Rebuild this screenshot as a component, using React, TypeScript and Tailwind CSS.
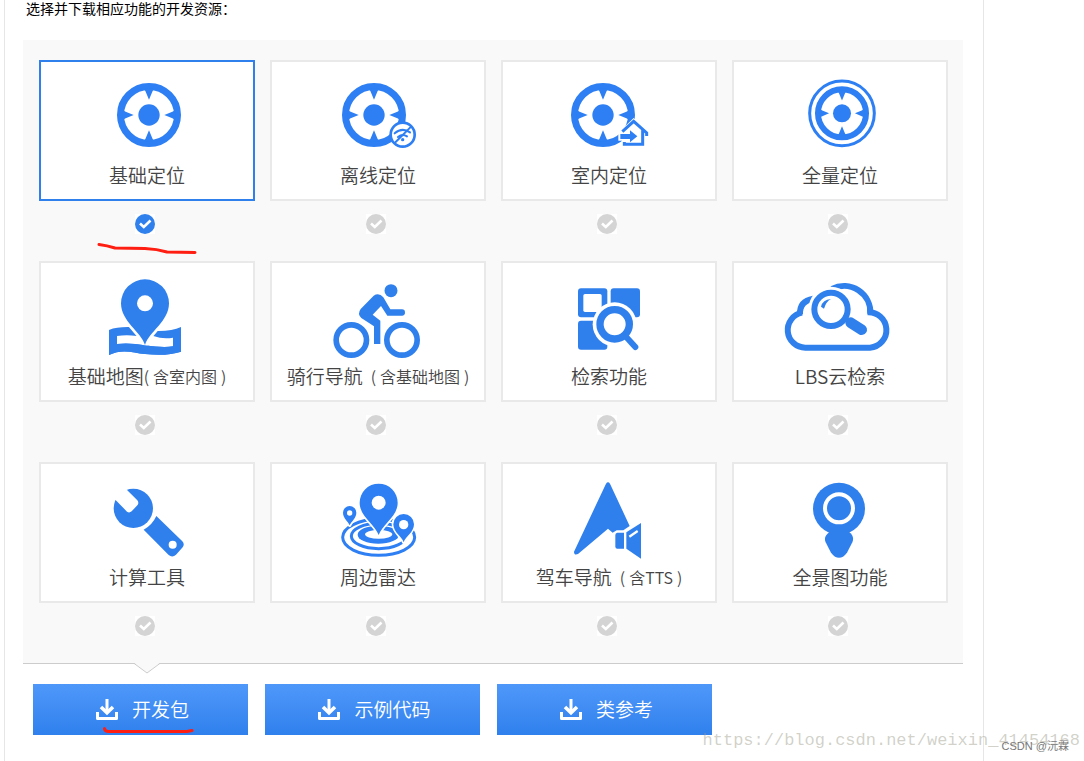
import React, { useState } from 'react';
import { clsx } from 'clsx';

const BLUE = '#2f80ed';
const BRIGHT = '#2d7ff3';

// Crosshair shared by all positioning products
const Compass = ({ cx, cy, scale = 1 }: { cx: number; cy: number; scale?: number }) => (
  <g transform={`translate(${cx} ${cy}) scale(${scale})`} fill={BRIGHT}>
    <circle r="85.5" fill="none" stroke={BRIGHT} strokeWidth="21" />
    <circle r="32" />
    {[0, 90, 180, 270].map((angle) => (
      <path key={angle} d="M-15 -80 L-10 -70 L0 -46 L10 -70 L15 -80 Z" transform={`rotate(${angle})`} />
    ))}
  </g>
);

const BasicLocation = () => <Compass cx={447} cy={345} />;

const OfflineLocation = () => (
  <>
    <Compass cx={342} cy={195} />
    <circle cx="428" cy="254" r="36" fill="#fff" stroke={BRIGHT} strokeWidth="8" />
    <g fill="none" stroke={BRIGHT} strokeWidth="6" strokeLinecap="round">
      <path d="M404 250 Q426 231 450 247" />
      <path d="M414 261 Q427 250 441 259" />
      <path d="M407 276 L451 232" />
    </g>
    <circle cx="428" cy="269" r="5" fill={BRIGHT} />
  </>
);

const IndoorLocation = () => (
  <>
    <Compass cx={339} cy={195} />
    <path d="M431 204 L385 248 V272 H396 V291 H468 V262 L478 250 Z" fill="#fff" />
    <path
      d="M397 245 L431 214 L470 249 V258 M458 240 V283 H403 V276"
      fill="none"
      stroke={BRIGHT}
      strokeWidth="9"
    />
    <path d="M391 252 H420 V241 L442 259 L420 277 V267 H391 Z" fill={BRIGHT} />
  </>
);

const FullLocation = () => (
  <>
    <circle cx="366" cy="190" r="97" fill="none" stroke={BRIGHT} strokeWidth="9" />
    <Compass cx={366} cy={190} scale={0.844} />
  </>
);

const BasicMap = () => (
  <>
    <path
      d="M237 225 Q265 214 312 217 L345 224 L380 228 Q425 229 453 216 V290 Q410 304 345 297 C310 293 275 280 237 300 Z"
      fill={BLUE}
    />
    <path d="M261 243 Q290 238 320 243 H370 Q400 254 429 248 V274 Q400 279 345 271 Q300 263 261 267 Z" fill="#fff" />
    <path
      d="M345 270 C333 230 273 200 273 145 A72 72 0 0 1 417 145 C417 200 357 230 345 270 Z"
      fill={BLUE}
      stroke="#fff"
      strokeWidth="16"
      strokeLinejoin="round"
      paintOrder="stroke"
    />
    {/* front fold of the map, over the outline of the pin */}
    <path
      d="M237 267 H261 Q300 263 345 271 Q400 279 429 274 H453 V290 Q410 304 345 297 C310 293 275 280 237 300 Z"
      fill={BLUE}
    />
    <circle cx="345" cy="145" r="24" fill="#fff" />
  </>
);

const Cycling = () => (
  <g fill={BLUE}>
    <g fill="none" stroke={BLUE} strokeWidth="17">
      <circle cx="274" cy="255" r="45.5" />
      <circle cx="426" cy="255" r="45.5" />
    </g>
    <circle cx="393" cy="107" r="19.5" />
    <path d="M341 122 L302 162 Q291 177 304 189 L342 214 V267 H361 V197 L338 179 L363 153 L382 182 H426 Q435 181 435 173 Q435 163 426 163 H391 L370 127 Q357 112 341 122 Z" />
  </g>
);

const Search = () => (
  <>
    <g fill={BLUE}>
      <rect x="264" y="100" width="88" height="87" rx="9" />
      <rect x="362" y="100" width="88" height="87" rx="9" />
      <rect x="264" y="197" width="88" height="87" rx="9" />
    </g>
    <rect x="280" y="117" width="55" height="54" rx="5" fill="#fff" />
    <circle cx="374" cy="208" r="66" fill="#fff" />
    <circle cx="374" cy="208" r="44" fill="none" stroke={BLUE} strokeWidth="22" />
    <path d="M408 245 L436 276" stroke={BLUE} strokeWidth="18" strokeLinecap="round" />
  </>
);

const CloudSearch = () => (
  <>
    <g fill="none" stroke={BLUE} strokeWidth="18">
      <path d="M336 102 A79 79 0 0 1 451 177" />
      <path d="M442 172 A53 53 0 1 1 450 278 H256 A53 53 0 0 1 246 173" />
      <path d="M240 178 Q238 138 280 131" />
    </g>
    <circle cx="333" cy="163" r="68" fill="#fff" />
    <circle cx="333" cy="163" r="50" fill="none" stroke={BLUE} strokeWidth="18" />
    <path d="M392 203 L425 224" stroke={BLUE} strokeWidth="32" strokeLinecap="round" />
    <path d="M303 155 Q308 134 333 132 Q318 140 312 161 Z" fill={BLUE} />
  </>
);

const Wrench = () => (
  <>
    <circle cx="310" cy="160" r="59" fill={BLUE} />
    <path d="M288 102 L322 136 Q328 144 322 151 L305 169 Q298 175 291 170 L256 134 L230 110 L260 80 Z" fill="#fff" />
    <path
      d="M379 183 L457 259 Q465 268 458 277 L438 299 Q427 309 416 300 L341 224 Q367 210 379 183 Z"
      fill={BLUE}
    />
    <circle cx="428" cy="269" r="12" fill="#fff" />
  </>
);

const Radar = () => (
  <>
    <g fill="none" stroke={BRIGHT}>
      <ellipse cx="1046" cy="247" rx="108" ry="54" strokeWidth="9" />
      <ellipse cx="1046" cy="243" rx="82" ry="38" strokeWidth="9" />
    </g>
    <ellipse cx="1045" cy="239" rx="62" ry="27" fill={BRIGHT} />
    <ellipse cx="1046" cy="238" rx="41" ry="13" fill="#fff" />
    <g fill={BRIGHT} stroke="#fff" strokeWidth="10" strokeLinejoin="round" paintOrder="stroke">
      <path d="M1046 240 C1035 208 989 185 989 143 A57 57 0 0 1 1103 143 C1103 185 1057 208 1046 240 Z" />
      <path d="M959 211 C955 199 939 190 939 173 A20 20 0 0 1 979 173 C979 190 963 199 959 211 Z" />
      <path d="M1121 262 C1115 244 1090 232 1090 208 A31 31 0 0 1 1152 208 C1152 232 1127 244 1121 262 Z" />
    </g>
    <g fill="#fff">
      <circle cx="1046" cy="143" r="21" />
      <circle cx="959" cy="174" r="8" />
      <circle cx="1121" cy="209" r="14" />
    </g>
  </>
);

const Driving = () => (
  <>
    <g fill={BLUE}>
      <path d="M348 86 Q354 78 360 86 L419 213 L400 226 H380 L368 233 L354 221 L264 297 Q252 302 252 290 Z" />
      <path d="M382 233 H402 V281 H382 Q376 281 376 275 V240 Q376 234 382 233 Z" />
      <path d="M409 232 L453 204 V311 L409 281 Z" />
    </g>
    <path d="M418 245 L443 228" stroke="#fff" strokeWidth="7" />
  </>
);

const Panorama = () => (
  <>
    <g fill={BLUE}>
      <circle cx="1047" cy="161" r="78" />
      <path d="M1020 230 Q999 243 1007 262 L1023 293 Q1047 324 1071 293 L1087 262 Q1095 243 1076 230 Z" />
    </g>
    <circle cx="1047" cy="160" r="42" fill="none" stroke="#fff" strokeWidth="12" />
  </>
);

interface Product {
  id: string;
  title: string;
  note?: string;
  tight?: boolean;
  viewBox: string;
  icon: React.FC;
}

const products: Product[] = [
  { id: 'basic-location', title: '基础定位', viewBox: '123 186 636 288', icon: BasicLocation },
  { id: 'offline-location', title: '离线定位', viewBox: '36 36 636 288', icon: OfflineLocation },
  { id: 'indoor-location', title: '室内定位', viewBox: '39 36 636 288', icon: IndoorLocation },
  { id: 'full-location', title: '全量定位', viewBox: '42 36 636 288', icon: FullLocation },
  { id: 'basic-map', title: '基础地图', note: '含室内图', tight: true, viewBox: '33 24 636 288', icon: BasicMap },
  { id: 'cycling', title: '骑行导航', note: '含基础地图', viewBox: '36 24 636 288', icon: Cycling },
  { id: 'search', title: '检索功能', viewBox: '39 24 636 288', icon: Search },
  { id: 'cloud-search', title: 'LBS云检索', viewBox: '42 24 636 288', icon: CloudSearch },
  { id: 'tools', title: '计算工具', viewBox: '33 27 636 288', icon: Wrench },
  { id: 'radar', title: '周边雷达', viewBox: '726 27 636 288', icon: Radar },
  { id: 'driving', title: '驾车导航', note: '含TTS', viewBox: '39 27 636 288', icon: Driving },
  { id: 'panorama', title: '全景图功能', viewBox: '732 27 636 288', icon: Panorama },
];

const downloads = ['开发包', '示例代码', '类参考'];

const ProductCard = ({ product, checked, onToggle }: { product: Product; checked: boolean; onToggle: () => void }) => {
  const Icon = product.icon;
  return (
    <div className="flex flex-col items-center pb-[27px]">
      <label
        htmlFor={product.id}
        className={clsx(
          'flex h-[141px] w-full cursor-pointer flex-col items-center border-2 bg-white',
          checked ? 'border-[#2f80ed]' : 'border-[#e9e9e9]'
        )}
      >
        <svg viewBox={product.viewBox} className="h-24 w-[212px] shrink-0" aria-hidden="true">
          <Icon />
        </svg>
        <span
          className={clsx(
            "flex items-center whitespace-nowrap font-['Noto_Sans_CJK_SC',sans-serif] text-[19px] leading-[34px] font-[350] text-[#444444]",
            !product.tight && 'gap-2'
          )}
        >
          {product.title}
          {product.note && (
            <span className="flex gap-1 text-base leading-[34px]">
              <span>(</span>
              <span>{product.note}</span>
              <span>)</span>
            </span>
          )}
        </span>
      </label>
      <span className="mt-[13px] mr-1 grid bg-white">
        <input
          id={product.id}
          type="checkbox"
          checked={checked}
          onChange={onToggle}
          className="col-start-1 row-start-1 size-5 cursor-pointer appearance-none rounded-full bg-[#d4d4d4] checked:bg-[#2f80ed]"
        />
        <svg viewBox="0 0 20 20" className="pointer-events-none col-start-1 row-start-1 size-5" aria-hidden="true">
          <path d="M5 9.5 L8.8 13 L15.5 6.5" fill="none" stroke="#fff" strokeWidth="2.6" />
        </svg>
      </span>
    </div>
  );
};

const DownloadIcon = () => (
  <svg viewBox="0 0 22 22" className="size-[22px]" fill="none" stroke="#fff" aria-hidden="true">
    <path d="M11 0 V13" strokeWidth="3" />
    <path d="M5 8 L11 13.8 L17 8" strokeWidth="3.6" />
    <path d="M1.5 13 V19.5 H20.5 V13" strokeWidth="3" strokeLinejoin="round" />
  </svg>
);

export default function App() {
  const [selected, setSelected] = useState<string[]>(['basic-location']);

  const toggle = (id: string) =>
    setSelected((prev) => (prev.includes(id) ? prev.filter((x) => x !== id) : [...prev, id]));

  return (
    <div className="relative min-h-screen overflow-hidden bg-white font-['Liberation_Sans','Noto_Sans_CJK_SC',sans-serif]">
      <main className="ml-1 min-h-screen max-w-[980px] border-x border-[#e6e6e6] pr-5 pl-[18px]">
        <p className="h-10 pl-[3px] text-sm leading-[18px] text-black">选择并下载相应功能的开发资源：</p>

        <section className="relative border-b border-[#cccccc] bg-[#f9f9f9] pt-5 pr-[15px] pl-4">
          <div className="grid grid-cols-4 gap-x-[15px]">
            {products.map((product) => (
              <ProductCard
                key={product.id}
                product={product}
                checked={selected.includes(product.id)}
                onToggle={() => toggle(product.id)}
              />
            ))}
          </div>
          <svg viewBox="0 0 28 12" className="absolute top-full left-[110px] h-3 w-7" aria-hidden="true">
            <path d="M0 -1 H28 L14 10 Z" fill="#f9f9f9" />
            <path d="M0.5 0 L14 10 L27.5 0" fill="none" stroke="#cccccc" />
          </svg>
        </section>

        <div className="flex gap-[17px] pt-5 pl-2.5">
          {downloads.map((name) => (
            <button
              key={name}
              type="button"
              className="flex h-[51px] w-[215px] cursor-pointer items-center justify-center gap-3.5 bg-linear-to-b from-[#4f98fa] to-[#2f80ed] pl-1 text-[19px] font-[350] text-white"
            >
              <DownloadIcon />
              <span className="pt-[3px]">{name}</span>
            </button>
          ))}
        </div>
      </main>

      {/* hand-drawn marks */}
      <svg
        viewBox="0 0 104 20"
        className="pointer-events-none absolute top-60 left-[95px] h-5 w-[104px]"
        fill="none"
        stroke="#ff1e12"
        strokeWidth="3"
        strokeLinecap="round"
        aria-hidden="true"
      >
        <path d="M4 4.5 Q12 5.5 20 8 L50 8.5 Q62 9 72 12 L100 12.5" />
      </svg>
      <svg
        viewBox="0 0 100 12"
        className="pointer-events-none absolute top-[724px] left-[100px] h-3 w-[100px]"
        fill="none"
        stroke="#ff1e12"
        strokeWidth="3"
        strokeLinecap="round"
        aria-hidden="true"
      >
        <path d="M4.5 4.5 Q4.5 7 8 7.5 H87 L92 6.5" />
      </svg>

      <span className="pointer-events-none absolute right-1 bottom-2 font-['Liberation_Mono',monospace] text-[17px] leading-6 text-[#999988]/45">
        https://blog.csdn.net/weixin_41454168
      </span>
      <span className="pointer-events-none absolute right-[15px] bottom-[7px] text-[11px] leading-4 text-[#777777]">
        CSDN @沅霖
      </span>
    </div>
  );
}
